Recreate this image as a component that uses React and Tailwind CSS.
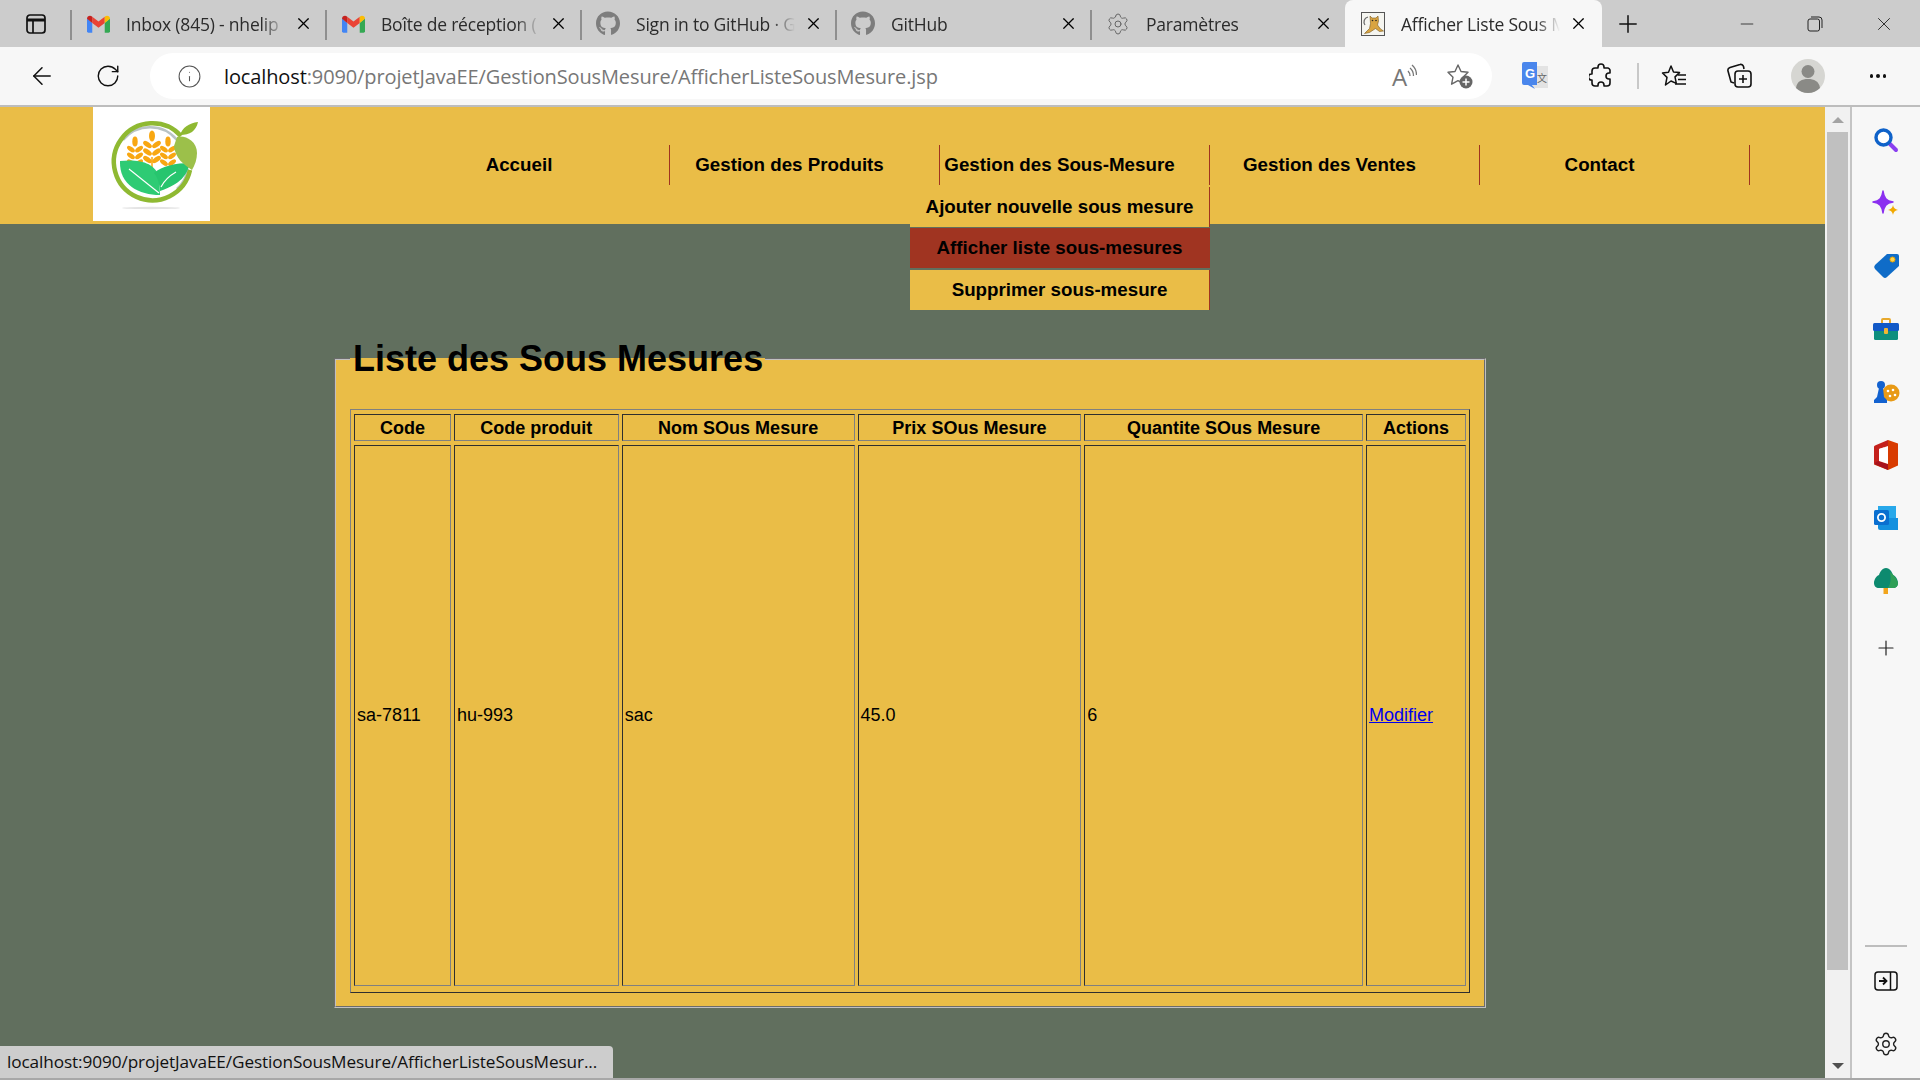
import { ArrowLeft, Info, Minus, Plus, RotateCw, Settings, X } from 'lucide-react'
import { FaGithub } from 'react-icons/fa'

const tabs = [
  { title: 'Inbox (845) - nhelip', icon: 'gmail' },
  { title: 'Boîte de réception (', icon: 'gmail' },
  { title: 'Sign in to GitHub · G', icon: 'github' },
  { title: 'GitHub', icon: 'github' },
  { title: 'Paramètres', icon: 'settings' },
  { title: 'Afficher Liste Sous M', icon: 'tomcat', active: true },
]

const navItems = ['Accueil', 'Gestion des Produits', 'Gestion des Sous-Mesure', 'Gestion des Ventes', 'Contact']

const columns = [
  { label: 'Code', width: 'w-[97px]', value: 'sa-7811' },
  { label: 'Code produit', width: 'w-[165px]', value: 'hu-993' },
  { label: 'Nom SOus Mesure', width: 'w-[233px]', value: 'sac' },
  { label: 'Prix SOus Mesure', width: 'w-[224px]', value: '45.0' },
  { label: 'Quantite SOus Mesure', width: 'w-[279px]', value: '6' },
  { label: 'Actions', width: 'w-[100px]', value: null },
]

function GmailIcon() {
  return (
    <svg width="23" height="18" viewBox="0 0 24 18">
      <path d="M0 3v13.5A1.5 1.5 0 0 0 1.5 18h4V8z" fill="#4285f4" />
      <path d="M24 3v13.5a1.5 1.5 0 0 1-1.5 1.5h-4V8z" fill="#34a853" />
      <path d="M5.5 8 12 13l6.5-5V1.5L12 6.5 5.500 1.500z" fill="#ea4335" />
      <path d="M0 3.500C0 .8 3.200-.6 5.500 1.500V8z" fill="#c5221f" />
      <path d="M18.500 1.500C20.800-.6 24 .8 24 3.500L18.500 8z" fill="#fbbc04" />
    </svg>
  )
}

function TomcatIcon() {
  return (
    <svg width="24" height="24" viewBox="0 0 24 24">
      <rect x="0.500" y="0.500" width="23" height="23" fill="#f5f5f0" stroke="#555" />
      <path d="M9 4l2 2h4l2-2 .5 5-1 4 3 4 3 2-4 .5-4-3-6 4-5 1 5-5 1-5z" fill="#d9a441" stroke="#7a5a20" strokeWidth="0.600" />
      <path d="M7 5C3 6 2 10 4 13" fill="none" stroke="#666" strokeWidth="1.200" />
      <circle cx="11.500" cy="8.500" r="0.800" fill="#222" />
      <circle cx="15" cy="8.500" r="0.800" fill="#222" />
    </svg>
  )
}

function TabIcon({ type }) {
  if (type === 'gmail') return <GmailIcon />
  if (type === 'github') return <FaGithub className="text-[25px] text-[#7d7d7d]" />
  if (type === 'settings') return <Settings size={26} strokeWidth={1} className="text-[#666]" />
  return <TomcatIcon />
}

function TabStrip() {
  return (
    <div className="flex h-[47px] shrink-0 bg-[#cccccc]">
      <div className="flex w-[70px] shrink-0 items-center pl-[26px]">
        <svg width="20" height="20" viewBox="0 0 20 20" fill="none" stroke="#111" strokeWidth="1.700">
          <rect x="1" y="1" width="18" height="18" rx="3" />
          <path d="M1 6h18" strokeWidth="3" />
          <path d="M7 6v13" />
        </svg>
      </div>
      {tabs.map((tab) => (
        <div
          key={tab.title}
          className={
            tab.active
              ? 'flex w-[257px] shrink-0 items-center rounded-t-[8px] bg-[#f7f7f7] pl-4'
              : 'relative flex w-[255px] shrink-0 items-center pl-4'
          }
        >
          {!tab.active ? <span className="absolute left-0 top-[10px] h-[30px] w-[1.500px] bg-[#8f8f8f]" /> : null}
          <span className="flex w-6 shrink-0 justify-center">
            <TabIcon type={tab.icon} />
          </span>
          <span className="ml-4 w-[159px] shrink-0 overflow-hidden whitespace-nowrap pt-[1px] text-[17.500px] tracking-[-0.2px] text-[#2b2b2b] [mask-image:linear-gradient(to_right,black_85%,transparent)]">
            {tab.title}
          </span>
          <X size={19} strokeWidth={1.500} className="ml-[9px] shrink-0 text-black" />
        </div>
      ))}
      <div className="flex w-[52px] items-center justify-center">
        <Plus size={28} strokeWidth={1.300} className="text-[#111]" />
      </div>
      <div className="flex flex-1 items-center text-[#222]">
        <Minus size={20} strokeWidth={1} className="ml-[83px]" />
        <svg width="16" height="16" viewBox="0 0 16 16" fill="none" stroke="#222" className="ml-[50px]">
          <rect x="1" y="3" width="11.500" height="12" rx="2" />
          <path d="M4 1h8a3 3 0 0 1 3 3v8" />
        </svg>
        <X size={22} strokeWidth={1} className="ml-[50px]" />
      </div>
    </div>
  )
}

function ReadAloudIcon() {
  return (
    <svg width="26" height="26" viewBox="0 0 26 26" fill="none" stroke="#777" strokeWidth="1.300">
      <text x="1" y="23" fontSize="24" fontFamily="Open Sans" fill="#777" stroke="none">A</text>
      <path d="M17 8c1.500 1.500 2 3 2 5M19 5c2.500 2 3.500 5 3.500 8M21 2c3 2.500 4.500 6 4.500 10" />
    </svg>
  )
}

function FavoriteAddIcon() {
  return (
    <svg width="28" height="28" viewBox="0 0 28 28">
      <path d="M12 3l3 6.500 7 .8-5 4.900 1.400 7-6.400-3.500-6.400 3.500 1.400-7-5-4.900 7-.8z" fill="none" stroke="#666" strokeWidth="1.400" strokeLinejoin="round" />
      <circle cx="20" cy="20" r="6.500" fill="#666" />
      <path d="M20 16.500v7M16.500 20h7" stroke="#fff" strokeWidth="1.500" />
    </svg>
  )
}

function TranslateIcon() {
  return (
    <svg width="26" height="30" viewBox="0 0 26 30">
      <rect x="11" y="5" width="15" height="22" fill="#e3e3e3" />
      <text x="15" y="21" fontSize="10" fontFamily="Noto Sans CJK SC" fill="#666">文</text>
      <path d="M2 1h13v23h-5l3 4-7-4H2a2 2 0 0 1-2-2V3a2 2 0 0 1 2-2z" fill="#4a86ec" />
      <text x="3" y="17" fontSize="13" fontWeight="700" fontFamily="Liberation Sans" fill="#fff">G</text>
    </svg>
  )
}

function PuzzleIcon() {
  return (
    <svg width="24" height="26" viewBox="0 0 24 26" fill="none" stroke="#111" strokeWidth="1.600" strokeLinejoin="round">
      <path d="M9 4a3 3 0 0 1 6 0v1h4a3 3 0 0 1 2 2v3h-1a3 3 0 0 0 0 6h1v4a3 3 0 0 1-3 3h-3v-1a3 3 0 0 0-6 0v1H6a3 3 0 0 1-3-3v-3h-.5a3 3 0 0 1 0-6H3V8a3 3 0 0 1 3-3h3z" />
    </svg>
  )
}

function FavoritesIcon() {
  return (
    <svg width="26" height="26" viewBox="0 0 26 26" fill="none" stroke="#111" strokeWidth="1.500" strokeLinejoin="round">
      <path d="M10 3l2.500 6 6 .6-4.500 4.300 1.300 6.500L10 18l-5.500 4 1.500-7.600L1.500 10l6-.8z" />
      <path d="M17 12h8M17 16.500h8M14 21h11" />
    </svg>
  )
}

function CollectionsIcon() {
  return (
    <svg width="26" height="28" viewBox="0 0 26 28" fill="none" stroke="#111" strokeWidth="1.600">
      <path d="M7 21l-3-1-3-11c-.5-2 .5-3 2-3.500l10-3c1.500-.5 3 .5 3.500 2L17 7" />
      <rect x="8" y="9" width="16" height="16" rx="3" />
      <path d="M16 13v8M12 17h8" />
    </svg>
  )
}

function Toolbar() {
  return (
    <div className="flex h-[60px] shrink-0 items-center border-b-2 border-[#bdbdbd] bg-[#f7f7f7] pl-6">
      <span className="flex w-9 justify-center">
        <ArrowLeft size={28} strokeWidth={1.300} className="text-[#111]" />
      </span>
      <span className="ml-[30px] flex w-9 justify-center">
        <RotateCw size={26} strokeWidth={1.300} className="text-[#111]" />
      </span>
      <div className="ml-6 flex h-[46px] w-[1342px] shrink-0 items-center rounded-full bg-white pl-[27px] pr-[18px]">
        <Info size={25} strokeWidth={1} className="text-[#555]" />
        <span className="ml-[22px] whitespace-nowrap pt-[1px] text-[20px] tracking-[-0.12px] text-[#777]">
          <span className="text-[#111]">localhost</span>:9090/projetJavaEE/GestionSousMesure/AfficherListeSousMesure.jsp
        </span>
        <span className="ml-auto flex items-center gap-[29px]">
          <ReadAloudIcon />
          <FavoriteAddIcon />
        </span>
      </div>
      <span className="ml-[23px] flex w-10 justify-center"><TranslateIcon /></span>
      <span className="ml-[26px] flex w-10 justify-center"><PuzzleIcon /></span>
      <span className="ml-4 h-[26px] w-[2px] bg-[#c8c8c8]" />
      <span className="ml-[15px] flex w-10 justify-center"><FavoritesIcon /></span>
      <span className="ml-[26px] flex w-10 justify-center"><CollectionsIcon /></span>
      <span className="ml-[28px] flex w-10 justify-center">
        <svg width="34" height="34" viewBox="0 0 34 34">
          <circle cx="17" cy="17" r="17" fill="#d6d6d2" />
          <circle cx="17" cy="12.500" r="6.500" fill="#8a8a86" />
          <path d="M5 29c1-7 6-9 12-9s11 2 12 9a17 17 0 0 1-24 0z" fill="#8a8a86" />
        </svg>
      </span>
      <span className="ml-[30px] flex w-10 justify-center gap-[3px]">
        <span className="h-[3.500px] w-[3.500px] rounded-full bg-[#111]" />
        <span className="h-[3.500px] w-[3.500px] rounded-full bg-[#111]" />
        <span className="h-[3.500px] w-[3.500px] rounded-full bg-[#111]" />
      </span>
    </div>
  )
}

function WheatStalk({ x, top, scale = 1 }) {
  const rows = [0, 1, 2]
  return (
    <g transform={`translate(${x} ${top}) scale(${scale})`} fill="#f8a712">
      <ellipse cx="0" cy="5" rx="3" ry="5.500" />
      {rows.map((row) => (
        <g key={row}>
          <ellipse cx="-4.500" cy={13.500 + row * 7.500} rx="5" ry="2.500" transform={`rotate(35 -4.500 ${13.500 + row * 7.500})`} />
          <ellipse cx="4.500" cy={13.500 + row * 7.500} rx="5" ry="2.500" transform={`rotate(-35 4.500 ${13.500 + row * 7.500})`} />
        </g>
      ))}
    </g>
  )
}

function Logo() {
  return (
    <div className="ml-[93px] h-[114px] w-[117px] shrink-0 bg-white">
      <svg width="117" height="114" viewBox="0 0 117 114">
        <ellipse cx="58" cy="101" rx="29" ry="1.200" fill="#e4e4e4" />
        <path d="M30 33A35 35 0 0 1 84 33" fill="none" stroke="#b9c3c4" strokeWidth="2.500" />
        <path d="M95 62A35 35 0 0 1 84 82" fill="none" stroke="#b9c3c4" strokeWidth="2.500" />
        <path d="M88 29A38.500 38.500 0 1 0 97 63" fill="none" stroke="#8fb932" strokeWidth="4.500" />
        <WheatStalk x={42} top={30} scale={0.900} />
        <WheatStalk x={59} top={24} />
        <WheatStalk x={75} top={30} scale={0.900} />
        <path d="M59 50v22" stroke="#f8a712" strokeWidth="1.500" />
        <path d="M27 54c18-2 36 1 39 17l1 17C46 88 26 78 27 54z" fill="#2ecb74" />
        <path d="M67 84c-1-10-3-14-6-18 8-7 22-10 36-10-3 12-9 21-30 28z" fill="#27c56e" />
        <path d="M36 62c10 8 20 16 30 24M68 80c3-6 8-11 15-15" stroke="#fff" strokeWidth="1.200" fill="none" />
        <path d="M84 30c8-2 20 4 20 16 0 6-2 12-5 17-8-5-17-12-18-24z" fill="#9cc04a" />
        <path d="M87 28c2-7 9-12 18-13-2 9-8 13-18 13z" fill="#8fb932" />
      </svg>
    </div>
  )
}

function Dropdown() {
  return (
    <div className="absolute left-0 top-[42px] w-[300px] text-center text-[18.750px] font-bold leading-[40px] text-black">
      <div className="h-[40px] border-r border-[#a0341f] bg-[#eabd47]">Ajouter nouvelle sous mesure</div>
      <div className="mt-[1px] h-[40px] bg-[#a03421] pr-[1px]">Afficher liste sous-mesures</div>
      <div className="mt-[2px] h-[40px] border-r border-[#a0341f] bg-[#eabd47]">Supprimer sous-mesure</div>
    </div>
  )
}

function Header() {
  return (
    <header className="flex h-[117px] shrink-0 bg-[#eabd47]">
      <Logo />
      <ul className="ml-[159px] mt-[38px] flex h-[40px]">
        {navItems.map((item, index) => (
          <li
            key={item}
            className={
              index === 0
                ? 'relative flex h-[40px] w-[301px] items-center justify-center border-r border-[#a0341f] text-[18.750px] font-bold text-black'
                : 'relative -ml-[30px] flex h-[40px] w-[300px] items-center justify-center border-r border-[#a0341f] text-[18.750px] font-bold text-black'
            }
          >
            {item}
            {index === 2 ? <Dropdown /> : null}
          </li>
        ))}
      </ul>
    </header>
  )
}

function ProductTable() {
  return (
    <table className="table-fixed border-separate border-spacing-x-[3px] border-spacing-y-[4px] border border-[#808080] border-b-[#2f2f2f] border-r-[#2f2f2f] pb-[2px] text-[18px] text-black">
      <thead>
        <tr>
          {columns.map((col) => (
            <th key={col.label} className={`${col.width} h-[27px] border border-[#808080] border-l-[#2f2f2f] border-t-[#2f2f2f] p-0 text-center font-bold leading-none`}>
              {col.label}
            </th>
          ))}
        </tr>
      </thead>
      <tbody>
        <tr>
          {columns.map((col) => (
            <td key={col.label} className="h-[541px] border border-[#808080] border-l-[#2f2f2f] border-t-[#2f2f2f] px-[2px] py-0 align-middle">
              {col.value ?? <a href="#modifier" className="text-[#0000ee] underline">Modifier</a>}
            </td>
          ))}
        </tr>
      </tbody>
    </table>
  )
}

function Page() {
  return (
    <main className="flex min-w-0 flex-1 flex-col bg-[#616f5e]" style={{ fontFamily: 'Liberation Sans, Arial, sans-serif' }}>
      <Header />
      <fieldset className="ml-[334px] mt-[114px] w-[1152px] border-2 border-[#c0c0c0] bg-[#eabd47] px-[14px] pb-[13px] pt-[30px] [border-style:groove]">
        <legend className="pl-[3px] pr-[2px] text-[36px] font-bold leading-[41px] text-black">Liste des Sous Mesures</legend>
        <ProductTable />
      </fieldset>
    </main>
  )
}

function Scrollbar() {
  return (
    <div className="flex w-[25px] shrink-0 flex-col items-center bg-[#f1f1f1]">
      <div className="flex h-[25px] shrink-0 items-center justify-center">
        <span className="h-0 w-0 border-x-[6px] border-b-[6px] border-x-transparent border-b-[#a3a3a3]" />
      </div>
      <div className="h-[838px] w-[21px] shrink-0 bg-[#c0c0c0]" />
      <div className="mt-auto flex h-[25px] shrink-0 items-center justify-center">
        <span className="h-0 w-0 border-x-[6px] border-t-[6px] border-x-transparent border-t-[#505050]" />
      </div>
    </div>
  )
}

const sideIcons = [
  <svg key="search" width="26" height="26" viewBox="0 0 26 26">
    <path d="M16 16l7 7" stroke="#8a3ff0" strokeWidth="4" strokeLinecap="round" />
    <circle cx="10.500" cy="10.500" r="7.500" fill="#fff" stroke="#0f62c9" strokeWidth="3.400" />
  </svg>,
  <svg key="sparkle" width="28" height="26" viewBox="0 0 28 26">
    <path d="M11 1c1 7 3 10 10 11-7 1-9 4-10 11-1-7-3-10-10-11 7-1 9-4 10-11z" fill="#8b2ff0" stroke="#8b2ff0" strokeWidth="1.500" strokeLinejoin="round" />
    <path d="M21 15c.5 3 2 4 5 5-3 .5-4.500 2-5 5-.5-3-2-4.500-5-5 3-1 4.500-2 5-5z" fill="#f2a900" />
  </svg>,
  <svg key="tag" width="26" height="26" viewBox="0 0 26 26">
    <path d="M14 1h10a2 2 0 0 1 2 2v10L14 24a3 3 0 0 1-4 0L2 16a3 3 0 0 1 0-4z" fill="#0f6cc8" />
    <circle cx="19.500" cy="6.500" r="2.500" fill="#ffd34d" stroke="#e8a400" />
  </svg>,
  <svg key="toolbox" width="26" height="24" viewBox="0 0 26 24">
    <path d="M9 6V3a1 1 0 0 1 1-1h6a1 1 0 0 1 1 1v3" fill="none" stroke="#e8a92c" strokeWidth="2" />
    <rect x="1" y="12" width="24" height="11" rx="1.500" fill="#0e8f7e" />
    <rect x="0" y="6" width="26" height="8" rx="1.500" fill="#1259c7" />
    <rect x="11" y="11" width="4" height="6" rx="1" fill="#f2b632" />
  </svg>,
  <svg key="chess" width="28" height="24" viewBox="0 0 28 24">
    <circle cx="19" cy="13" r="8.500" fill="#e89a16" />
    <circle cx="16" cy="11" r="1.300" fill="#fff" />
    <circle cx="21" cy="10" r="1.300" fill="#fff" />
    <circle cx="23" cy="15" r="1.300" fill="#fff" />
    <circle cx="18" cy="16" r="1.300" fill="#fff" />
    <circle cx="9" cy="5" r="4" fill="#1362d0" />
    <path d="M7 8h4l1 9 3 3v3H2v-3l3-3z" fill="#1362d0" />
  </svg>,
  <svg key="office" width="24" height="30" viewBox="0 0 24 30">
    <path d="M14 0l10 3.500v22L14 30 0 24.500z" fill="#d83b01" />
    <path d="M14 0 1 5.500c-1 .5-1 1-1 2V24l5-2.500V9l9-3z" fill="#c4211c" />
    <path d="M0 24c2-2 3-3 5-3l9 3v6z" fill="#a8131d" />
    <path d="M14 6v18l-9-3V9z" fill="#fff" />
  </svg>,
  <svg key="outlook" width="24" height="24" viewBox="0 0 24 24">
    <rect x="4" y="0" width="18" height="12" fill="#28a8ea" />
    <path d="M4 12h20v12H6a2 2 0 0 1-2-2z" fill="#1490df" />
    <rect x="0" y="4" width="15" height="15" rx="1.500" fill="#0a6fd0" />
    <circle cx="7.500" cy="11.500" r="3.600" fill="none" stroke="#fff" strokeWidth="1.800" />
  </svg>,
  <svg key="tree" width="24" height="26" viewBox="0 0 24 26">
    <rect x="9.500" y="18" width="4.500" height="8" fill="#f2a51c" />
    <path d="M12 0c4 0 6 4 7 7 3 1 5 5 5 8 0 3-2 5-5 5H5c-3 0-5-2-5-5 0-3 2-7 5-8 1-3 3-7 7-7z" fill="#0d8a6f" />
    <path d="M16 4c3 2 7 7 8 11 0 3-2 5-5 5h-5c3-4 3-11 2-16z" fill="#2f9f57" />
  </svg>,
  <Plus key="plus" size={24} strokeWidth={1.200} className="mt-[8px] text-[#222]" />,
]

function Sidebar() {
  return (
    <aside className="flex w-[70px] shrink-0 flex-col border-l-2 border-[#c4c4c4] bg-[#f7f7f7] pb-[3px] pt-[1px]">
      {sideIcons.map((icon) => (
        <div key={icon.key} className="flex h-[63px] items-center justify-center">{icon}</div>
      ))}
      <div className="mx-auto mb-[2px] mt-auto h-[2px] w-[42px] bg-[#bdbdbd]" />
      <div className="flex h-[63px] items-center justify-center">
        <svg width="24" height="20" viewBox="0 0 24 20" fill="none" stroke="#111" strokeWidth="1.500">
          <rect x="1" y="1" width="22" height="18" rx="3" />
          <path d="M16.500 1v18" />
          <path d="M5 10h7M9 6.500l3.500 3.500L9 13.500" strokeWidth="1.800" />
        </svg>
      </div>
      <div className="flex h-[63px] items-center justify-center">
        <Settings size={26} strokeWidth={1.300} className="text-[#222]" />
      </div>
    </aside>
  )
}

export default function App() {
  return (
    <div className="relative flex h-screen w-[1920px] flex-col overflow-hidden bg-[#f7f7f7]" style={{ fontFamily: 'Open Sans, sans-serif' }}>
      <TabStrip />
      <Toolbar />
      <div className="flex h-[971px] shrink-0">
        <Page />
        <Scrollbar />
        <Sidebar />
      </div>
      <div className="h-[2px] shrink-0 bg-[#a8a8a8]" />
      <div className="absolute bottom-[2px] left-0 flex h-[32px] w-[613px] items-center rounded-tr-[4px] bg-[#cdcdcd] pl-[7px] text-[17.200px] tracking-[-0.1px] text-[#111]">
        localhost:9090/projetJavaEE/GestionSousMesure/AfficherListeSousMesur...
      </div>
    </div>
  )
}
